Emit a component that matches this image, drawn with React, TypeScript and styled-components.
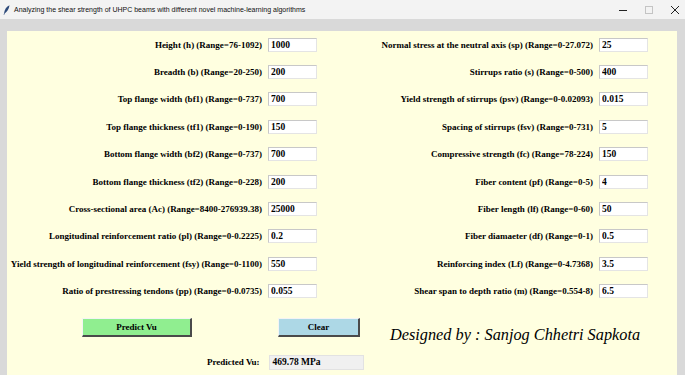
import React from "react"
import styled, { createGlobalStyle } from "styled-components"

const SERIF = `"Liberation Serif", "Times New Roman", "DejaVu Serif", serif`

const GlobalStyle = createGlobalStyle`
  html, body {
    margin: 0;
    padding: 0;
    width: 685px;
    height: 375px;
    overflow: hidden;
    background: #d9d9d9;
  }
`

const leftFields = [
  ["Height (h) (Range=76-1092)", "1000"],
  ["Breadth (b) (Range=20-250)", "200"],
  ["Top flange width (bf1) (Range=0-737)", "700"],
  ["Top flange thickness (tf1) (Range=0-190)", "150"],
  ["Bottom flange width (bf2) (Range=0-737)", "700"],
  ["Bottom flange thickness (tf2) (Range=0-228)", "200"],
  ["Cross-sectional area (Ac) (Range=8400-276939.38)", "25000"],
  ["Longitudinal reinforcement ratio (pl) (Range=0-0.2225)", "0.2"],
  ["Yield strength of longitudinal reinforcement (fsy) (Range=0-1100)", "550"],
  ["Ratio of prestressing tendons (pp) (Range=0-0.0735)", "0.055"],
]

const rightFields = [
  ["Normal stress at the neutral axis (sp) (Range=0-27.072)", "25"],
  ["Stirrups ratio (s) (Range=0-500)", "400"],
  ["Yield strength of stirrups (psv) (Range=0-0.02093)", "0.015"],
  ["Spacing of stirrups (fsv) (Range=0-731)", "5"],
  ["Compressive strength (fc) (Range=78-224)", "150"],
  ["Fiber content (pf) (Range=0-5)", "4"],
  ["Fiber length (lf) (Range=0-60)", "50"],
  ["Fiber diamaeter (df) (Range=0-1)", "0.5"],
  ["Reinforcing index (Lf) (Range=0-4.7368)", "3.5"],
  ["Shear span to depth ratio (m) (Range=0.554-8)", "6.5"],
]

const Window = styled.div`
  width: 685px;
  height: 375px;
  display: flex;
  flex-direction: column;
  background: #d9d9d9;
  overflow: hidden;
`

const TitleBar = styled.div`
  height: 19px;
  flex: none;
  display: flex;
  align-items: center;
  background: #f3f3f3;
  padding-left: 3px;
`

const TitleText = styled.span`
  font-family: "Liberation Sans", Arial, sans-serif;
  font-size: 7px;
  color: #111;
  margin-left: 4px;
  flex: 1;
  white-space: nowrap;
`

const Controls = styled.div`
  display: flex;
  align-items: center;
  gap: 16px;
  margin-right: 5px;
`

const Body = styled.div`
  flex: 1;
  padding: 12px 8px 0 7px;
  display: flex;
`

const Panel = styled.div`
  flex: 1;
  background: #ffffe0;
  display: flex;
  flex-direction: column;
`

const FormGrid = styled.div`
  display: grid;
  grid-template-columns: 255px 49px 270px 49px;
  grid-auto-rows: 27.4px;
  column-gap: 6px;
  align-items: center;
`

const Label = styled.label<{ $col: number }>`
  grid-column: ${(p) => p.$col};
  text-align: right;
  font-family: ${SERIF};
  font-weight: bold;
  font-size: 9px;
  color: #000;
  white-space: nowrap;
`

const Entry = styled.input<{ $col: number }>`
  grid-column: ${(p) => p.$col};
  box-sizing: border-box;
  width: 49px;
  height: 14px;
  margin: 0;
  padding: 0 2px;
  background: #fff;
  border: 1px solid #e4e4e4;
  border-top-color: #c8c8c8;
  border-left-color: #c8c8c8;
  font-family: ${SERIF};
  font-weight: bold;
  font-size: 9.5px;
  color: #000;
  outline: none;
`

const ButtonRow = styled.div`
  display: flex;
  align-items: flex-start;
  margin-top: 13px;
  padding-left: 75px;
`

const TkButton = styled.button<{ $bg: string; $w: number }>`
  box-sizing: border-box;
  width: ${(p) => p.$w}px;
  height: 19px;
  margin: 0;
  padding: 0;
  background: ${(p) => p.$bg};
  border-style: solid;
  border-width: 1px 2px 2px 1px;
  border-color: #f4f4f4 #4a4a4a #4a4a4a #f4f4f4;
  font-family: ${SERIF};
  font-weight: bold;
  font-size: 9px;
  color: #000;
`

const ClearButton = styled(TkButton)`
  margin-left: 86px;
`

const Credit = styled.div`
  margin-left: 30px;
  margin-top: 7px;
  font-family: ${SERIF};
  font-style: italic;
  font-size: 16.3px;
  line-height: 19px;
  color: #000;
  white-space: nowrap;
`

const OutputRow = styled.div`
  display: flex;
  align-items: center;
  margin-top: 11px;
  padding-left: 200px;
  gap: 9px;
`

const OutputLabel = styled.span`
  font-family: ${SERIF};
  font-weight: bold;
  font-size: 9px;
  color: #000;
`

const OutputBox = styled.div`
  box-sizing: border-box;
  width: 95px;
  height: 15px;
  background: #f0f0f0;
  border: 1px solid #e2e2e2;
  padding-left: 3px;
  display: flex;
  align-items: center;
  font-family: ${SERIF};
  font-weight: bold;
  font-size: 9.5px;
  color: #000;
`

const Feather = () => (
  <svg width="7" height="10" viewBox="0 0 7 10">
    <path d="M6.5 0.3 C3.5 1.5 1.5 4.5 1 8.5 L0.6 9.8 L1.3 9.8 L1.6 8.6 C4 7 6 4 6.5 0.3 Z" fill="#2d4a7a" />
  </svg>
)

const WindowControls = () => (
  <Controls>
    <svg width="10" height="10" viewBox="0 0 10 10">
      <line x1="1" y1="5.5" x2="9" y2="5.5" stroke="#222" strokeWidth="1" />
    </svg>
    <svg width="10" height="10" viewBox="0 0 10 10">
      <rect x="1.5" y="1.5" width="7" height="7" fill="none" stroke="#c4c4c4" strokeWidth="1" />
    </svg>
    <svg width="10" height="10" viewBox="0 0 10 10">
      <path d="M1 1 L9 9 M9 1 L1 9" stroke="#222" strokeWidth="1" />
    </svg>
  </Controls>
)

export default function App() {
  return (
    <>
      <GlobalStyle />
      <Window>
        <TitleBar>
          <Feather />
          <TitleText>Analyzing the shear strength of UHPC beams with different novel machine-learning algorithms</TitleText>
          <WindowControls />
        </TitleBar>
        <Body>
          <Panel>
            <FormGrid>
              {leftFields.map(([label, value], i) => (
                <React.Fragment key={i}>
                  <Label $col={1} style={{ gridRow: i + 1 }}>{label}</Label>
                  <Entry $col={2} style={{ gridRow: i + 1 }} defaultValue={value} />
                  <Label $col={3} style={{ gridRow: i + 1 }}>{rightFields[i][0]}</Label>
                  <Entry $col={4} style={{ gridRow: i + 1 }} defaultValue={rightFields[i][1]} />
                </React.Fragment>
              ))}
            </FormGrid>
            <ButtonRow>
              <TkButton $bg="#90ee90" $w={110}>Predict Vu</TkButton>
              <ClearButton $bg="#add8e6" $w={82}>Clear</ClearButton>
              <Credit>Designed by : Sanjog Chhetri Sapkota</Credit>
            </ButtonRow>
            <OutputRow>
              <OutputLabel>Predicted Vu:</OutputLabel>
              <OutputBox>469.78 MPa</OutputBox>
            </OutputRow>
          </Panel>
        </Body>
      </Window>
    </>
  )
}
